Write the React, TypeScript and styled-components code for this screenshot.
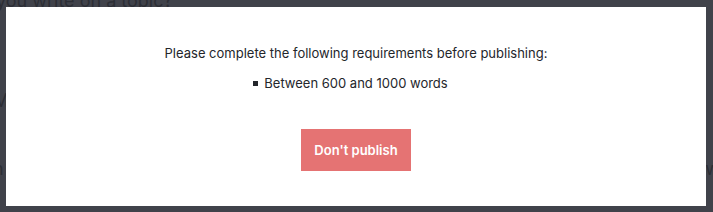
import styled, { createGlobalStyle } from "styled-components";

const Global = createGlobalStyle`
  html, body {
    margin: 0;
    padding: 0;
    background: #40424a;
    font-family: Inter, "Liberation Sans", Arial, sans-serif;
    overflow: hidden;
  }
`;

// faint article behind the overlay
const Page = styled.div`
  height: 212px;
  color: #2c2e35;
  font-size: 18px;
  line-height: 1;
`;

const PageTitle = styled.div`
  margin-top: -8px;
  margin-left: -4px;
`;

const PageLine = styled.div<{ $top: number }>`
  margin-top: ${(p) => p.$top}px;
  margin-left: -7px;
  display: flex;
  justify-content: space-between;
  width: 727px;
`;

const Overlay = styled.div`
  position: fixed;
  inset: 0;
  display: flex;
  align-items: flex-start;
  justify-content: flex-start;
  padding: 7px 0 0 6px;
`;

const Modal = styled.div`
  width: 700px;
  height: 199px;
  background: #ffffff;
  box-sizing: border-box;
  padding-top: 37px;
  display: flex;
  flex-direction: column;
  align-items: center;
  color: #24262b;
`;

const Message = styled.p`
  margin: 0;
  font-size: 13px;
  line-height: 18px;
`;

const Requirements = styled.ul`
  margin: 12px 0 0 0;
  padding: 0;
  list-style: none;
  font-size: 13px;
  line-height: 18px;
`;

const Requirement = styled.li`
  display: flex;
  align-items: center;
  gap: 6px;

  &::before {
    content: "";
    width: 5px;
    height: 5px;
    background: #24262b;
    margin-left: -11px;
  }
`;

const PublishButton = styled.button`
  margin-top: 37px;
  width: 110px;
  height: 42px;
  border: 0;
  background: #e57373;
  color: #ffffff;
  font-family: inherit;
  font-weight: 600;
  font-size: 13px;
  cursor: pointer;
`;

export default function App() {
  return (
    <>
      <Global />
      <Page>
        <PageTitle>you write on a topic?</PageTitle>
        <PageLine $top={82}>
          <span>M</span>
          <span></span>
        </PageLine>
        <PageLine $top={50}>
          <span>n</span>
          <span>w</span>
        </PageLine>
      </Page>
      <Overlay>
        <Modal>
          <Message>Please complete the following requirements before publishing:</Message>
          <Requirements>
            <Requirement>Between 600 and 1000 words</Requirement>
          </Requirements>
          <PublishButton>Don't publish</PublishButton>
        </Modal>
      </Overlay>
    </>
  );
}
